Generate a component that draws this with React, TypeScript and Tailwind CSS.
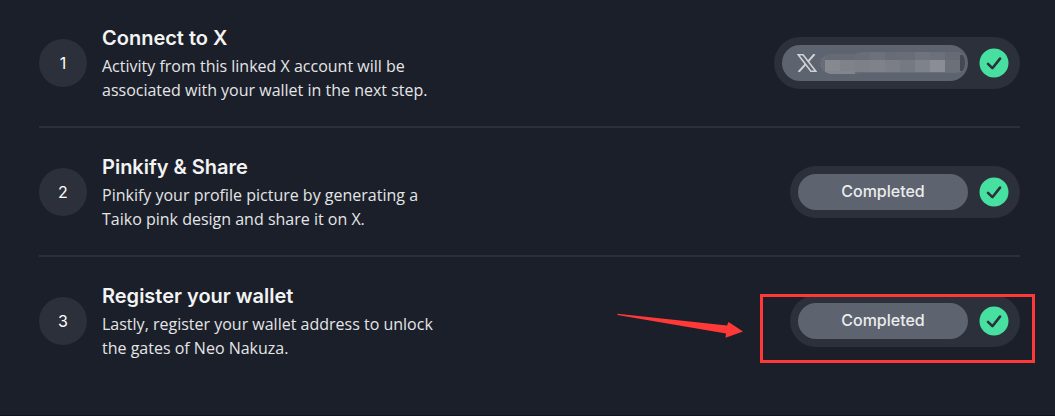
import type { ReactNode } from "react";

function CheckBadge() {
  return (
    <svg viewBox="0 0 30 30" className="size-[30px] shrink-0" role="img" aria-label="Done">
      <circle cx="15" cy="15" r="14.5" fill="#47e0a0" />
      <path d="M9 15.8 L13.4 20.2 L21 10.6" fill="none" stroke="#2b303b" strokeWidth="2.6" strokeLinecap="round" strokeLinejoin="round" />
    </svg>
  );
}

function XLogo() {
  return (
    <svg viewBox="0 0 20 18" className="h-[18px] w-5 shrink-0" role="img" aria-label="X">
      <path d="M1.2 0.8 H6.1 L18.8 17.2 H13.9 Z" fill="none" stroke="#d0d2d6" strokeWidth="1.6" />
      <path d="M17.6 0 L11 7.6 M8.6 10.2 L1.6 18" fill="none" stroke="#d0d2d6" strokeWidth="2" />
    </svg>
  );
}

const upper = ["#656a75", "#656a75", "#686d77", "#6d717b", "#686c76", "#686d77", "#6f737d", "#6b707a", "#656a75"];
const lower = ["#86898f", "#7f8289", "#7d8088", "#7f8289", "#7a7e86", "#757983", "#7e828b", "#8a8d96", "#6b707a"];

function HiddenHandle() {
  return (
    <svg viewBox="0 0 146 24" className="h-6 w-[146px] shrink-0" aria-hidden="true">
      <clipPath id="handle">
        <path d="M10 3 H35 L42 1 H138 Q145 3 145 12 Q145 22 136 22 H43 L35 23 H10 Q0 20 0 13 Q0 5 10 3 Z" />
      </clipPath>
      <g clipPath="url(#handle)">
        <rect width="146" height="24" fill="#686d77" />
        {upper.map((c, i) => (
          <rect key={i} x={5 + i * 15} y="0" width="15" height="9" fill={c} />
        ))}
        {lower.map((c, i) => (
          <rect key={i} x={5 + i * 15} y="9" width="15" height="12" fill={c} />
        ))}
        <rect x="5" y="20" width="30" height="4" fill="#82858c" />
        <rect x="140" y="4" width="6" height="16" fill="#434853" />
      </g>
    </svg>
  );
}

function Highlight() {
  return (
    <>
      <div className="pointer-events-none absolute -top-px -right-[15px] -bottom-4 -left-[30px] border-3 border-[#ff3838]" />
      <svg viewBox="0 0 128 26" className="pointer-events-none absolute top-[17px] right-[276px] h-[26px] w-32" aria-hidden="true">
        <path d="M1.5 1.8 L111 13.5 L112.5 10 L127 19.5 L109.5 25.7 L110 21.5 L1.5 3 Z" fill="#ff3838" />
      </svg>
    </>
  );
}

function Status({ children, highlighted }: { children: ReactNode; highlighted?: boolean }) {
  return (
    <div className="relative flex shrink-0 items-center gap-[11px] rounded-full bg-[#2b303b] py-2 pr-[11px] pl-2">
      {children}
      <CheckBadge />
      {highlighted && <Highlight />}
    </div>
  );
}

function Completed() {
  return (
    <button type="button" className="h-9 w-[170px] rounded-full bg-[#5d636f] pb-0.5 text-base font-medium text-[#ececed]">
      Completed
    </button>
  );
}

type StepProps = { number: number; title: string; lines: [string, string]; children: ReactNode };

function Step({ number, title, lines, children }: StepProps) {
  return (
    <li className="flex items-center gap-[15px] border-b-2 border-[#2b303b] pt-6 pb-[23px] first:pt-[23px] last:border-b-0">
      <span className="flex size-12 shrink-0 items-center justify-center rounded-full bg-[#2b303b] text-base text-white">{number}</span>
      <div className="flex-1 pb-px">
        <h2 className="mb-px text-xl leading-[30px] font-semibold text-[#f3f3f3]">{title}</h2>
        <p className="text-base leading-6 font-medium text-[#e4e5e7] font-['Open_Sans','Liberation_Sans',sans-serif]">
          {lines[0]}
          <br />
          {lines[1]}
        </p>
      </div>
      {children}
    </li>
  );
}

export default function App() {
  return (
    <main className="min-h-screen overflow-hidden border-b border-[#11141c] bg-[#1b1f29] pr-[35px] pl-[39px] font-['Inter','Liberation_Sans',sans-serif]">
      <ol>
        <Step number={1} title="Connect to X" lines={["Activity from this linked X account will be", "associated with your wallet in the next step."]}>
          <Status>
            <button type="button" aria-label="Linked X account" className="flex h-9 w-[186px] items-center gap-[3px] rounded-full bg-[#5d636f] pl-[15px]">
              <XLogo />
              <HiddenHandle />
            </button>
          </Status>
        </Step>
        <Step number={2} title="Pinkify & Share" lines={["Pinkify your profile picture by generating a", "Taiko pink design and share it on X."]}>
          <Status>
            <Completed />
          </Status>
        </Step>
        <Step number={3} title="Register your wallet" lines={["Lastly, register your wallet address to unlock", "the gates of Neo Nakuza."]}>
          <Status highlighted>
            <Completed />
          </Status>
        </Step>
      </ol>
    </main>
  );
}
